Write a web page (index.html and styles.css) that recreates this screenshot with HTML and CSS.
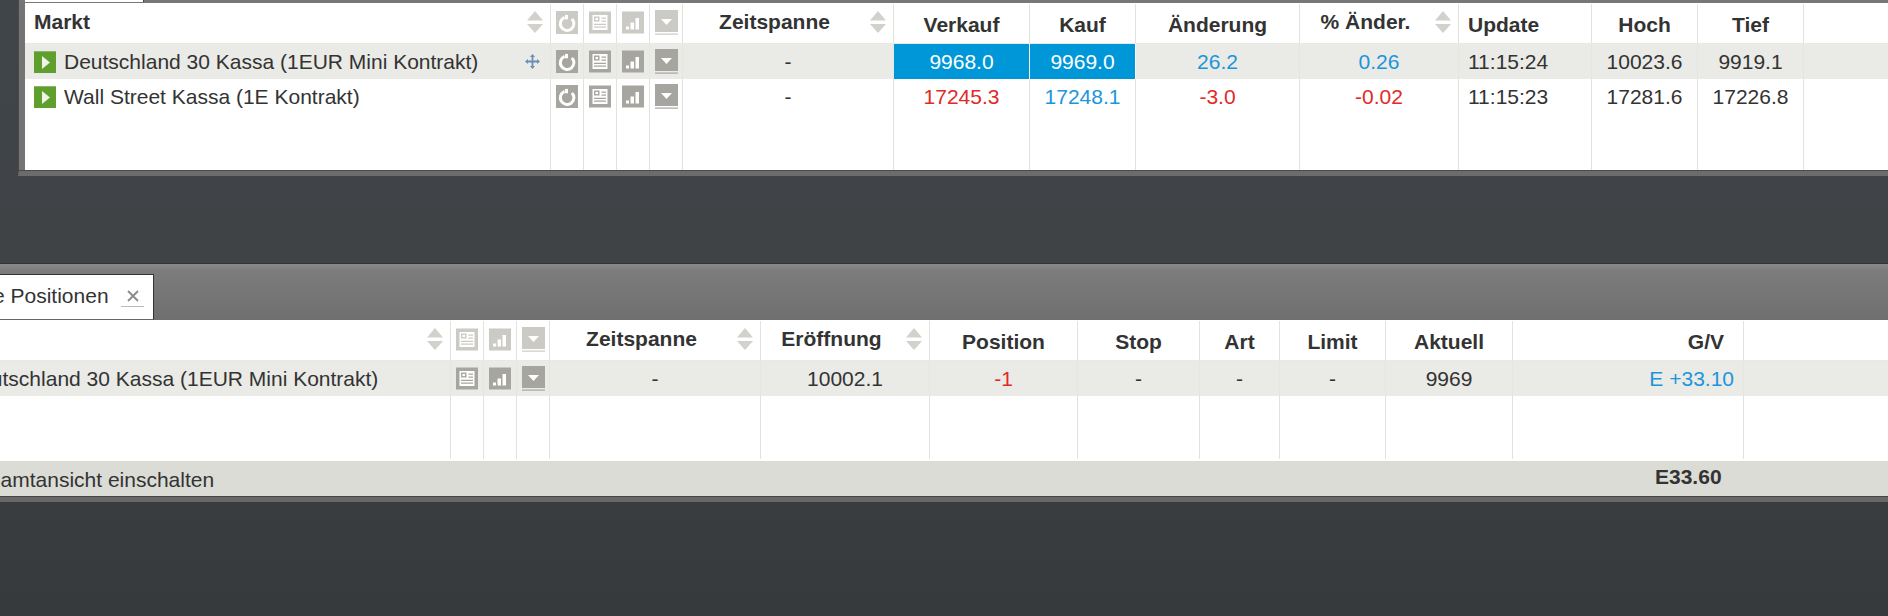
FILE: index.html
```html
<!DOCTYPE html>
<html lang="de">
<head>
<meta charset="utf-8">
<title>Märkte und Positionen</title>
<link rel="stylesheet" href="styles.css">
</head>
<body>
<svg class="sprite" width="0" height="0" aria-hidden="true">
  <symbol id="i-sort" viewBox="0 0 16 22"><path d="M8 0l8 9.500H0zM0 13h16l-8 9z"/></symbol>
  <symbol id="i-refresh" viewBox="0 0 22 23"><rect width="22" height="23" fill="currentColor"/><path d="M8.600 6.400a6.800 6.800 0 1 0 7.200 1.400" fill="none" stroke="#fff" stroke-width="3"/><path d="M12 3.600l5 3.600-5.600 1.800z" fill="currentColor"/><path d="M9 3.900h3v4.400H9z" fill="#fff"/></symbol>
  <symbol id="i-news" viewBox="0 0 22 22"><rect width="22" height="22" fill="currentColor"/><path d="M3.500 3.500h15v15h-15z" fill="#fff"/><path d="M5 5h5.500v5H5zM12.500 6h4.500v1.200h-4.500zM12.500 9h4.500v1.200h-4.500zM5 12.200h12v1.200H5zM5 15h12v1.200H5z" fill="currentColor"/><path d="M6.400 6.400h2.700v2.200H6.400z" fill="#fff"/></symbol>
  <symbol id="i-bars" viewBox="0 0 22 22"><rect width="22" height="22" fill="currentColor"/><path d="M4 15h3v3H4zM8.500 11h3.500v7H8.500zM13.500 6.500H17V18h-3.500z" fill="#fff"/></symbol>
  <symbol id="i-drop" viewBox="0 0 23 25"><path d="M0 0h23v22H0z" fill="currentColor"/><path d="M0 23.500h23v1.200H0z" fill="currentColor"/><path d="M6 9h11l-5.500 6z" fill="#fff"/></symbol>
  <symbol id="i-move" viewBox="0 0 15 15"><path d="M7.500 0l2.500 3H8.400v3.600H12V5l3 2.500L12 10V8.400H8.400V12H10l-2.500 3L5 12h1.600V8.400H3V10L0 7.500 3 5v1.600h3.600V3H5z"/></symbol>
  <symbol id="i-play" viewBox="0 0 22 22"><path d="M0 0h22v22H0z" fill="#5f9f2e"/><path d="M0 0h22v1H0z" fill="#8ab56a"/><path d="M8 5l8 6.500-8 6.500z" fill="#eef4e6"/></symbol>
</svg>

<section class="panel markets">
  <div class="strip"><div class="stub"></div></div>
  <div class="row cols-a head">
    <div class="cell market"><span class="ttl">Markt</span><svg class="sort"><use href="#i-sort"/></svg></div>
    <div class="cell"><svg class="ic dim w22"><use href="#i-refresh"/></svg></div>
    <div class="cell"><svg class="ic dim w22"><use href="#i-news"/></svg></div>
    <div class="cell"><svg class="ic dim w22"><use href="#i-bars"/></svg></div>
    <div class="cell"><svg class="ic dim w23"><use href="#i-drop"/></svg></div>
    <div class="cell sorted"><span class="lbl">Zeitspanne</span><svg class="sort"><use href="#i-sort"/></svg></div>
    <div class="cell low">Verkauf</div>
    <div class="cell low">Kauf</div>
    <div class="cell low">Änderung</div>
    <div class="cell sorted"><span class="lbl">% Änder.</span><svg class="sort"><use href="#i-sort"/></svg></div>
    <div class="cell low start">Update</div>
    <div class="cell low">Hoch</div>
    <div class="cell low">Tief</div>
    <div class="cell"></div>
  </div>
  <div class="row cols-a data shaded">
    <div class="cell market"><svg class="play"><use href="#i-play"/></svg><span>Deutschland 30 Kassa (1EUR Mini Kontrakt)</span><svg class="move"><use href="#i-move"/></svg></div>
    <div class="cell"><svg class="ic w22"><use href="#i-refresh"/></svg></div>
    <div class="cell"><svg class="ic w22"><use href="#i-news"/></svg></div>
    <div class="cell"><svg class="ic w22"><use href="#i-bars"/></svg></div>
    <div class="cell"><svg class="ic w23"><use href="#i-drop"/></svg></div>
    <div class="cell">-</div>
    <div class="cell flash">9968.0</div>
    <div class="cell flash">9969.0</div>
    <div class="cell up">26.2</div>
    <div class="cell up">0.26</div>
    <div class="cell start">11:15:24</div>
    <div class="cell">10023.6</div>
    <div class="cell">9919.1</div>
    <div class="cell"></div>
  </div>
  <div class="row cols-a data second">
    <div class="cell market"><svg class="play"><use href="#i-play"/></svg><span>Wall Street Kassa (1E Kontrakt)</span></div>
    <div class="cell"><svg class="ic w22"><use href="#i-refresh"/></svg></div>
    <div class="cell"><svg class="ic w22"><use href="#i-news"/></svg></div>
    <div class="cell"><svg class="ic w22"><use href="#i-bars"/></svg></div>
    <div class="cell"><svg class="ic w23"><use href="#i-drop"/></svg></div>
    <div class="cell">-</div>
    <div class="cell down">17245.3</div>
    <div class="cell up">17248.1</div>
    <div class="cell down">-3.0</div>
    <div class="cell down">-0.02</div>
    <div class="cell start">11:15:23</div>
    <div class="cell">17281.6</div>
    <div class="cell">17226.8</div>
    <div class="cell"></div>
  </div>
  <div class="row cols-a filler filler-a">
    <div class="cell"></div><div class="cell"></div><div class="cell"></div><div class="cell"></div><div class="cell"></div><div class="cell"></div><div class="cell"></div><div class="cell"></div><div class="cell"></div><div class="cell"></div><div class="cell"></div><div class="cell"></div><div class="cell"></div><div class="cell"></div>
  </div>
</section>

<section class="panel positions">
  <div class="tabbar">
    <div class="tab"><span>Offene Positionen</span><span class="close"><svg class="x" viewBox="0 0 12 12"><path d="M1 1l10 10M11 1L1 11"/></svg></span></div>
  </div>
  <div class="row cols-b head">
    <div class="cell market"><span class="ttl">Markt</span><svg class="sort"><use href="#i-sort"/></svg></div>
    <div class="cell"><svg class="ic dim w22"><use href="#i-news"/></svg></div>
    <div class="cell"><svg class="ic dim w22"><use href="#i-bars"/></svg></div>
    <div class="cell"><svg class="ic dim w23"><use href="#i-drop"/></svg></div>
    <div class="cell sorted"><span class="lbl">Zeitspanne</span><svg class="sort"><use href="#i-sort"/></svg></div>
    <div class="cell sorted"><span class="lbl">Eröffnung</span><svg class="sort"><use href="#i-sort"/></svg></div>
    <div class="cell low">Position</div>
    <div class="cell low">Stop</div>
    <div class="cell low">Art</div>
    <div class="cell low">Limit</div>
    <div class="cell low">Aktuell</div>
    <div class="cell low end head-end">G/V</div>
    <div class="cell"></div>
  </div>
  <div class="row cols-b data shaded">
    <div class="cell market"><span class="nameonly">Deutschland 30 Kassa (1EUR Mini Kontrakt)</span></div>
    <div class="cell"><svg class="ic w22"><use href="#i-news"/></svg></div>
    <div class="cell"><svg class="ic w22"><use href="#i-bars"/></svg></div>
    <div class="cell"><svg class="ic w23"><use href="#i-drop"/></svg></div>
    <div class="cell">-</div>
    <div class="cell">10002.1</div>
    <div class="cell down">-1</div>
    <div class="cell">-</div>
    <div class="cell">-</div>
    <div class="cell">-</div>
    <div class="cell">9969</div>
    <div class="cell up end">E +33.10</div>
    <div class="cell"></div>
  </div>
  <div class="row cols-b filler filler-b">
    <div class="cell"></div><div class="cell"></div><div class="cell"></div><div class="cell"></div><div class="cell"></div><div class="cell"></div><div class="cell"></div><div class="cell"></div><div class="cell"></div><div class="cell"></div><div class="cell"></div><div class="cell"></div><div class="cell"></div>
  </div>
  <div class="foot">
    <span class="foot-link">Gesamtansicht einschalten</span>
    <strong class="foot-sum">E33.60</strong>
  </div>
</section>
</body>
</html>
```

FILE: styles.css
```css
html, body {
  margin: 0;
  height: 616px;
  overflow: hidden;
}

body {
  background: linear-gradient(180deg, #40454a 0, #3f4346 40%, #363a3c 100%);
  font-family: "Liberation Sans", Arial, sans-serif;
  font-size: 21px;
  color: #333;
}

.sprite {
  position: absolute;
}

.panel {
  box-sizing: border-box;
  background: #fff;
}

/* Window frames */
.markets {
  margin-left: 18px;
  height: 176px;
  border-left: 1px solid #4a4a4a;
  border-bottom: 5px solid #6c6c6c;
  padding-left: 6px;
  background: linear-gradient(90deg, #747474 0, #747474 6px, #fff 6px);
}

.markets::after {
  content: "";
  display: block;
  height: 1px;
  margin-left: -6px;
  background: #4a4a4a;
}

.strip {
  height: 3px;
  margin-left: -6px;
  padding-left: 6px;
  background: #777;
}

.stub {
  box-sizing: border-box;
  width: 119px;
  height: 2px;
  background: #fff;
  border-right: 1px solid #444;
}

.positions {
  margin-top: 87px;
  margin-left: -75px;
  width: 2100px;
  height: 239px;
  border-top: 1px solid #333;
  border-bottom: 5px solid #686868;
}

.tabbar {
  height: 56px;
  display: flex;
  align-items: flex-end;
  background: linear-gradient(180deg, #8a8a8a 0, #7c7c7c 12%, #6f6f6f 100%);
}

.tab {
  box-sizing: border-box;
  width: 229px;
  height: 46px;
  padding: 0 9px 2px 17px;
  display: flex;
  align-items: center;
  justify-content: space-between;
  background: #fff;
  border-top: 1px solid #333;
  border-right: 1px solid #333;
  border-bottom: 1px solid #666;
}

.close {
  display: flex;
  justify-content: center;
  width: 23px;
  padding: 5px 0 4px;
  border-bottom: 1px solid #bbb;
}

.x {
  width: 12px;
  height: 12px;
  fill: none;
  stroke: #8a8a8a;
  stroke-width: 1.8;
}

/* Grid rows */
.row {
  display: grid;
}

.cols-a {
  grid-template-columns: 526px 33px 33px 33px 33px 211px 136px 106px 164px 159px 133px 106px 106px 1fr;
}

.cols-b {
  grid-template-columns: 526px 33px 33px 33px 211px 169px 148px 122px 80px 106px 127px 231px 1fr;
}

.cell {
  box-sizing: border-box;
  min-width: 0;
  display: flex;
  align-items: center;
  justify-content: center;
  border-right: 1px solid #e2e2df;
  white-space: nowrap;
}

.cell:last-child {
  border-right: 0;
}

.head {
  box-sizing: border-box;
  height: 41px;
  border-bottom: 1px solid #e8e8e4;
  font-weight: 700;
}

.head .cell {
  margin-top: 1px;
  padding-bottom: 3px;
}

.head .low {
  padding-top: 2px;
  padding-bottom: 0;
}

.data {
  height: 35px;
}

.filler-a {
  height: 56px;
}

.filler-b {
  height: 63px;
}

.shaded {
  background: #eaeae6;
}

.shaded .cell {
  border-right-color: #e6e6e1;
}

.market {
  justify-content: flex-start;
  padding-left: 9px;
  padding-right: 7px;
}

.nameonly {
  padding-left: 30px;
}

.ttl {
  flex: 1;
}

.sorted {
  padding-right: 7px;
}

.lbl {
  flex: 1;
  text-align: center;
  padding-right: 4px;
}

.start {
  justify-content: flex-start;
  padding-left: 9px;
}

.end {
  justify-content: flex-end;
  padding-right: 9px;
}

.head-end {
  padding-right: 19px;
}

.up {
  color: #1a96dc;
}

.down {
  color: #e02a27;
}

.shaded .flash {
  background: #0097d9;
  color: #fff;
  border-right-color: #fff;
}

/* Icons */
.sort {
  flex: none;
  width: 16px;
  height: 22px;
  fill: #d2d1cc;
}

.play {
  flex: none;
  width: 22px;
  height: 22px;
  margin-right: 8px;
}

.move {
  flex: none;
  width: 15px;
  height: 15px;
  margin-left: auto;
  margin-right: 3px;
  fill: #6a90b8;
}

.ic {
  flex: none;
  height: 23px;
  color: #a7a59f;
}

.w22 {
  width: 22px;
}

.w23 {
  width: 23px;
  height: 25px;
}

.dim {
  color: #cbcac5;
}

/* Footer */
.foot {
  box-sizing: border-box;
  height: 35px;
  margin-top: 2px;
  padding: 3px 0 0 37px;
  display: flex;
  align-items: center;
  background: #dbdcd6;
}

.foot-link {
  flex: none;
  width: 1693px;
}

.foot-sum {
  margin-top: -6px;
}

.positions::after {
  content: "";
  display: block;
  height: 1px;
  background: #444;
}
```
